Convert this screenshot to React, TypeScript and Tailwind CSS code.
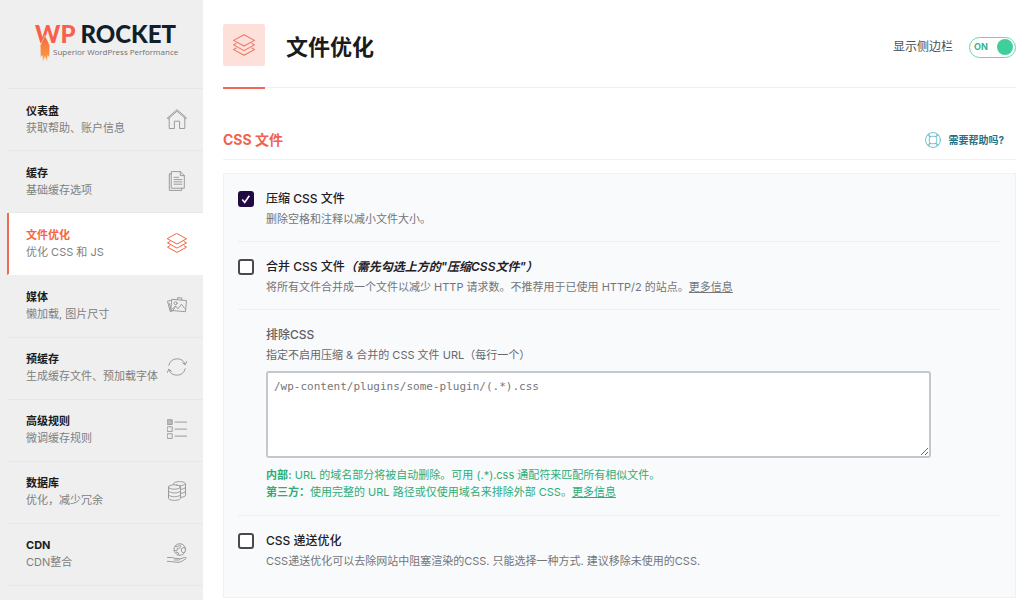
import React, { useState } from 'react';

type IconProps = { className?: string };

function Svg({ className, children }: { className?: string; children: React.ReactNode }) {
  return (
    <svg
      viewBox="0 0 20 20"
      className={className}
      fill="none"
      stroke="currentColor"
      strokeWidth="1"
      strokeLinejoin="round"
      strokeLinecap="round"
      aria-hidden="true"
    >
      {children}
    </svg>
  );
}

const HomeIcon = ({ className }: IconProps) => (
  <Svg className={className}>
    <path d="M2.2 9.2v10.3h5.2v-7.3h5.2v7.3h5.2V9.2" />
    <path d="M.5 8.900 10 .6l9.500 8.300-.8.9L10 2.200 1.300 9.800z" />
  </Svg>
);

const PagesIcon = ({ className }: IconProps) => (
  <Svg className={className}>
    <path d="M4.600.6h8.700l4 4v12.600H4.600z" />
    <path d="M13.300.6v4h4" />
    <path d="M4.600 2.800H2.300v16.600h12.400v-2.200" />
    <path d="M7 6.300h4.500M7 8.600h7.800M7 10.900h7.800M7 13.200h7.800" />
  </Svg>
);

const LayersIcon = ({ className }: IconProps) => (
  <Svg className={className}>
    <path d="M10 .6 19.500 5.800 10 11 .5 5.800z" />
    <path d="M2.800 8.600.5 9.900 10 15.100l9.500-5.200-2.300-1.300" />
    <path d="M2.800 12.800.5 14.200 10 19.400l9.500-5.200-2.300-1.400" />
  </Svg>
);

const MediaIcon = ({ className }: IconProps) => (
  <Svg className={className}>
    <path d="m5.200 4.300 14.300 1.300-1.100 11.100-14.300-1.300z" />
    <path d="m4.500 5.200-4 1 2.700 10.300 2.200-.5" />
    <path d="m10.500 4.500.2-1.900 4.200.4-.2 1.900M2.200 8.300l2 6.300" />
    <circle cx="8.600" cy="8.200" r="1.500" />
    <path d="m5.500 13.700 3.200-2.600 2.300 2.700 3.500-4.600 3 4.100M6 15.500l2.700-4.400" />
  </Svg>
);

const RefreshIcon = ({ className }: IconProps) => (
  <Svg className={className}>
    <path d="M1.800 8.200A8.600 8.600 0 0 1 18.200 7.500" />
    <path d="M18.200 11.800A8.600 8.600 0 0 1 1.800 12.500" />
    <path d="m15.700 6 2.700 1.700 1.200-3.200M4.300 14 1.600 12.300.5 15.500" />
  </Svg>
);

const RulesIcon = ({ className }: IconProps) => (
  <Svg className={className}>
    <path d="M.6.800h4.600v4.600H.6z" fill="currentColor" fillOpacity="0.6" />
    <path d="M.6 7.800h4.600v4.600H.6zM.6 14.800h4.600v4.600H.6z" />
    <path d="M8 3.100h11.500M8 10.100h11.500M8 17.100h11.500" />
  </Svg>
);

const DatabaseIcon = ({ className }: IconProps) => (
  <Svg className={className}>
    <ellipse cx="7.500" cy="6" rx="6" ry="2.200" />
    <path d="M1.500 6v11.200c0 1.200 2.700 2.200 6 2.200s6-1 6-2.200V6" />
    <path d="M1.500 9.700c0 1.200 2.700 2.200 6 2.200s6-1 6-2.200M1.500 13.500c0 1.200 2.700 2.200 6 2.200s6-1 6-2.200" />
    <path d="M6.700 3.600V2.700C6.700 1.500 9.300.6 12.500.6s6 .9 6 2.100v11.500c0 1.100-2.100 2-4.700 2.200" />
    <path d="M9.500 4.100c.8.300 1.900.5 3 .5 3.300 0 6-.9 6-2M13.800 8.300c2.700-.2 4.700-1 4.700-2.100M13.800 12.300c2.700-.2 4.700-1 4.700-2.100" />
  </Svg>
);

const CdnIcon = ({ className }: IconProps) => (
  <Svg className={className}>
    <circle cx="12.800" cy="6.500" r="5.800" />
    <path d="m8.300 3.200 2.300.5 1.600-1.500 1.800.9-1.400 2-2.400.7-.3 2-2.600-.4M14.500 5.800l2.500-1.600 1.300 2.100M14.300 6.400l.3 2.300 1.700 1.300 1.200-1.200M9.300 9.200l2 .6.500 2.200" />
    <path d="M.5 14.500h4.200c1.800 0 2.500 1 4.300 1h2.700c1.300 0 1.300 1.500 0 1.500H7.500M12.600 16l5.200-1.600c1.500-.4 2 .9.900 1.500-2.300 1.400-4.700 3.300-7.700 3.400-3.300.1-5.500-.9-10.500-.9" />
  </Svg>
);

const HelpIcon = ({ className }: IconProps) => (
  <Svg className={className}>
    <circle cx="10" cy="10" r="9.300" />
    <path d="M6.500 5.800c2.300-.7 4.700-.7 7 0l.7.700c.7 2.300.7 4.700 0 7l-.7.700c-2.300.7-4.700.7-7 0l-.7-.7c-.7-2.300-.7-4.700 0-7z" />
    <path d="M5.900 6.200 3.300 3.500M6.600 5.700 4.700 2.700M14.100 6.200l2.600-2.700M13.400 5.700l1.900-3M5.900 13.800l-2.600 2.700M6.600 14.300l-1.900 3M14.100 13.800l2.600 2.700M13.400 14.300l1.900 3" />
  </Svg>
);

const menu = [
  { title: '仪表盘', text: '获取帮助、账户信息', Icon: HomeIcon },
  { title: '缓存', text: '基础缓存选项', Icon: PagesIcon },
  { title: '文件优化', text: '优化 CSS 和 JS', Icon: LayersIcon, active: true },
  { title: '媒体', text: '懒加载, 图片尺寸', Icon: MediaIcon },
  { title: '预缓存', text: '生成缓存文件、预加载字体', Icon: RefreshIcon },
  { title: '高级规则', text: '微调缓存规则', Icon: RulesIcon },
  { title: '数据库', text: '优化，减少冗余', Icon: DatabaseIcon },
  { title: 'CDN', text: 'CDN整合', Icon: CdnIcon },
];

function Logo() {
  return (
    <div className="relative ml-7 whitespace-nowrap">
      <div className="font-['Lato',sans-serif] text-2xl leading-6 font-black text-[#10202b]">
        <span className="text-[#f7604a]">WP</span> ROCKET
      </div>
      <div className="mt-0.5 ml-[18px] font-['Open_Sans',sans-serif] text-[8px] leading-2 text-[#6f6f6f]">
        Superior WordPress Performance
      </div>
      <svg viewBox="0 0 12 28" className="absolute top-3 left-1 h-7 w-3" aria-hidden="true">
        <defs>
          <linearGradient id="flame" x1="0" y1="0" x2="0" y2="1">
            <stop offset="0" stopColor="#f7604a" />
            <stop offset="0.350" stopColor="#f67f3f" />
            <stop offset="1" stopColor="#f9a040" />
          </linearGradient>
        </defs>
        <path
          d="M6 1.500 9.300 8l1.500 3.500-.3 11.700-1.800-1.600-.6 6.200-1.300-3.600-.8-1.700-.8 1.700-1.300 3.600-.6-6.200-1.800 1.600-.3-11.700L2.700 8z"
          fill="url(#flame)"
          stroke="#efefef"
          strokeWidth="0.500"
        />
      </svg>
    </div>
  );
}

function Sidebar() {
  return (
    <aside className="flex w-[203px] shrink-0 flex-col bg-[#efefef] pb-3.5 pl-[7px]">
      <div className="h-[88px] pt-[22px]">
        <Logo />
      </div>
      <nav className="flex flex-1 flex-col border-t border-[#e7e7e8]">
        {menu.map(({ title, text, Icon, active }) => (
          <a
            key={title}
            href="#"
            aria-current={active ? 'page' : undefined}
            className={
              active
                ? 'flex min-h-[62px] flex-1 items-center justify-between border-b border-l-2 border-b-white border-l-[#ef6a52] bg-white pr-4 pl-[17px] text-[#f56640]'
                : 'flex min-h-[62px] flex-1 items-center justify-between border-b border-l-2 border-b-[#e7e7e8] border-l-transparent pr-4 pl-[17px] text-[#1b1b1d]'
            }
          >
            <span className="whitespace-nowrap">
              <span className="block text-[11px] leading-[17px] font-bold">{title}</span>
              <span className="block text-[11px] leading-[17px] text-[#808080]">{text}</span>
            </span>
            <Icon className={active ? 'mb-0.5 size-5 shrink-0' : 'mb-0.5 size-5 shrink-0 text-[#9b9b9b]'} />
          </a>
        ))}
      </nav>
    </aside>
  );
}

function Option({
  id,
  title,
  note,
  checked = false,
  children,
}: {
  id: string;
  title: string;
  note?: string;
  checked?: boolean;
  children: React.ReactNode;
}) {
  return (
    <div className="flex gap-3 pt-[15px] pb-[13px]">
      <span className="relative mt-0.5 size-4 shrink-0">
        <input
          id={id}
          type="checkbox"
          defaultChecked={checked}
          className="peer block size-4 appearance-none rounded-[3px] border-2 border-[#4a4a4e] bg-white checked:border-[#1f0b41] checked:bg-[#1f0b41]"
        />
        <svg
          viewBox="0 0 16 16"
          className="pointer-events-none absolute inset-0 hidden size-4 peer-checked:block"
          fill="none"
          stroke="white"
          strokeWidth="1.600"
          aria-hidden="true"
        >
          <path d="m4.300 8.500 2.400 3 4.600-6.700" />
        </svg>
      </span>
      <div className="min-w-0">
        <label htmlFor={id} className="block text-xs leading-5 font-medium text-[#1f2025]">
          {title}
          {note && <em className="font-semibold">{note}</em>}
        </label>
        <p className="mt-px text-[11px] leading-[18px] text-[#737578]">{children}</p>
      </div>
    </div>
  );
}

export default function App() {
  const [on, setOn] = useState(true);
  return (
    <div className="flex min-h-screen bg-white font-['Inter','Noto_Sans_CJK_SC',sans-serif]" lang="zh-CN">
      <Sidebar />
      <main className="min-w-0 flex-1 pr-2 pl-5">
        <header className="flex border-b border-[#edeff1] pt-6">
          <div className="-mb-0.5 border-b-2 border-[#ef6a5a] pb-[21px]">
            <div className="flex size-[42px] items-center justify-center rounded-xs bg-[#fee0da] text-[#ee7565]">
              <LayersIcon className="size-[22px]" />
            </div>
          </div>
          <div className="mb-[17px] flex flex-1 items-center justify-between pl-[21px]">
            <h1 className="text-[22px] leading-8 font-bold text-[#1b1b1d]">文件优化</h1>
            <label className="flex items-center gap-4 text-xs text-[#4f5052]">
              显示侧边栏
              <button
                type="button"
                role="switch"
                aria-checked={on}
                onClick={() => setOn(!on)}
                className="flex h-[21px] w-[47px] items-center justify-between rounded-full border border-[#6fd3ae] bg-white pr-0.5 pl-1 text-[9px] font-bold text-[#35b58a]"
              >
                {on ? 'ON' : 'OFF'}
                <span className="size-4 rounded-full bg-[#3ecf9b]" />
              </button>
            </label>
          </div>
        </header>

        <section>
          <div className="mt-[33px] flex h-[39px] items-center justify-between border-b border-[#f1f2f4] pr-3">
            <h2 className="text-sm font-bold text-[#f0624f]">CSS 文件</h2>
            <a href="#" className="flex items-center gap-[7px] text-[10px] font-bold text-[#1e7186]">
              <HelpIcon className="size-4 text-[#4fb0c4]" />
              需要帮助吗?
            </a>
          </div>

          <div className="mt-[13px] divide-y divide-[#edeff2] border border-[#f0f1f4] bg-[#f9fafc] px-3.5">
            <Option id="minify" title="压缩 CSS 文件" checked>
              删除空格和注释以减小文件大小。
            </Option>
            <Option id="combine" title="合并 CSS 文件" note="（需先勾选上方的&quot;压缩CSS文件&quot;）">
              将所有文件合并成一个文件以减少 HTTP 请求数。不推荐用于已使用 HTTP/2 的站点。
              <a href="#" className="underline">更多信息</a>
            </Option>
            <div className="pt-[15px] pr-[70px] pb-3.5 pl-7">
              <label htmlFor="exclude" className="block text-xs leading-5 font-medium text-[#5f6063]">
                排除CSS
              </label>
              <p className="mt-px text-[11px] leading-[18px] text-[#66686b]">
                指定不启用压缩 &amp; 合并的 CSS 文件 URL（每行一个）
              </p>
              <textarea
                id="exclude"
                placeholder="/wp-content/plugins/some-plugin/(.*).css"
                className="mt-[7px] block h-[87px] w-full rounded-[3px] border-2 border-[#c4c7ce] bg-white px-1.5 py-[5px] font-['DejaVu_Sans_Mono',monospace] text-[11px] leading-[18px] placeholder:text-[#75777a]"
              />
              <p className="mt-[9px] text-[11px] leading-[17px] text-[#2fac76]">
                <strong>内部:</strong> URL 的域名部分将被自动删除。可用 (.*).css 通配符来匹配所有相似文件。
                <br />
                <strong>第三方：</strong>使用完整的 URL 路径或仅使用域名来排除外部 CSS。
                <a href="#" className="underline">更多信息</a>
              </p>
            </div>
            <div className="pb-3.5">
              <Option id="delivery" title="CSS 递送优化">
                CSS递送优化可以去除网站中阻塞渲染的CSS. 只能选择一种方式. 建议移除未使用的CSS.
              </Option>
            </div>
          </div>
        </section>
      </main>
    </div>
  );
}
